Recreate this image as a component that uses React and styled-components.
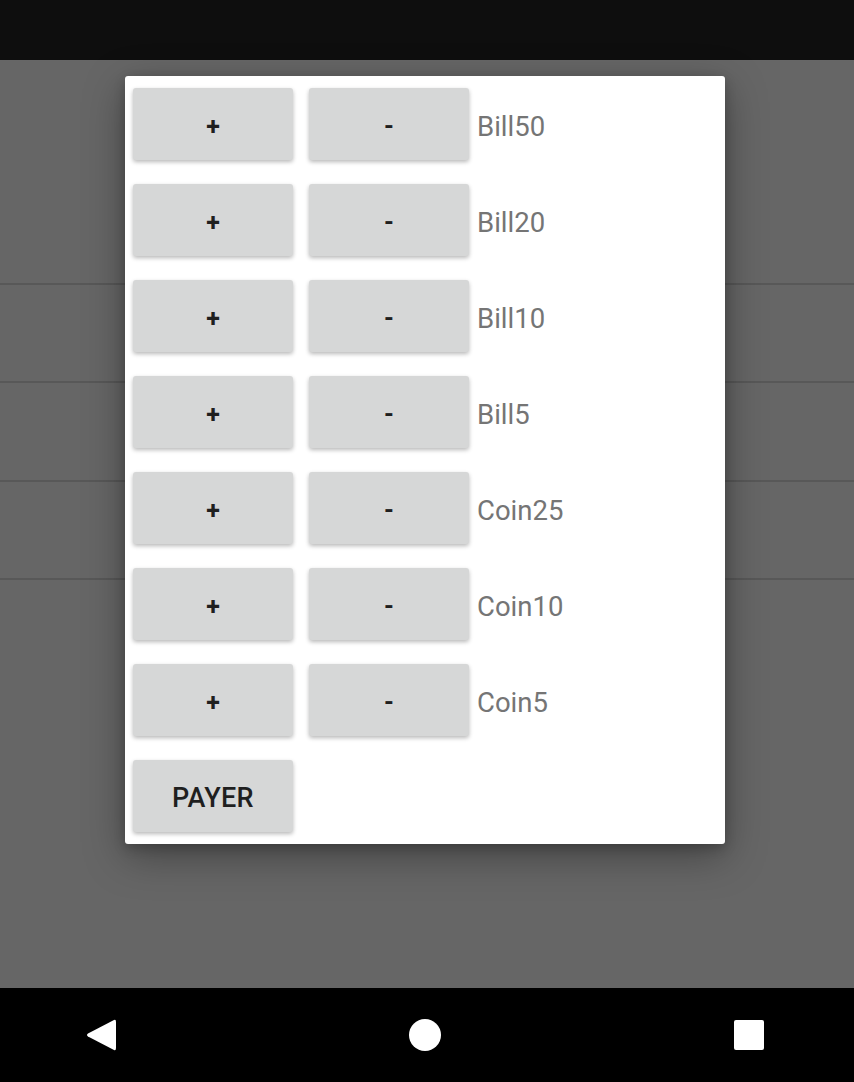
import React from 'react';
import styled, { createGlobalStyle } from 'styled-components';

const Global = createGlobalStyle`
    html, body {
        margin: 0;
        padding: 0;
    }
    body {
        font-family: Roboto, "Liberation Sans", sans-serif;
    }
`;

const Denominations = ['Bill50', 'Bill20', 'Bill10', 'Bill5', 'Coin25', 'Coin10', 'Coin5'];

const Screen = styled.div`
    position: relative;
    width: 854px;
    height: 1082px;
    display: flex;
    flex-direction: column;
    overflow: hidden;
`;
const StatusBar = styled.div`
    height: 60px;
    background-color: #0e0e0e;
`;
const Backdrop = styled.div`
    flex: 1;
    background-color: #666666;
    display: flex;
    flex-direction: column;
`;
const ListItem = styled.div`
    height: ${p => p.h}px;
    border-bottom: solid 2px #585858;
`;
const NavBar = styled.div`
    height: 94px;
    background-color: #000000;
    display: flex;
    align-items: center;
    justify-content: space-between;
    padding: 0 90px 0 86px;
`;
const Dialog = styled.div`
    position: absolute;
    top: 76px;
    left: 125px;
    width: 600px;
    box-sizing: border-box;
    padding: 12px 8px;
    background-color: #ffffff;
    border-radius: 3px;
    box-shadow: 0 12px 40px rgba(0, 0, 0, 0.35), 0 4px 12px rgba(0, 0, 0, 0.2);
    display: flex;
    flex-direction: column;
    gap: 24px;
`;
const Row = styled.div`
    display: flex;
    align-items: center;
    gap: 16px;
`;
const Sbutton = styled.button`
    width: 160px;
    height: 72px;
    border: none;
    border-radius: 3px;
    background-color: #d6d7d7;
    box-shadow: 0 2px 4px rgba(0, 0, 0, 0.28);
    color: #1f1f1f;
    font-family: Roboto, "Liberation Sans", sans-serif;
    font-weight: ${p => p.big ? 500 : 700};
    font-size: ${p => p.big ? 27 : 25}px;
    letter-spacing: ${p => p.big ? '0.3px' : '0'};
    padding: 4px 0 0;
    margin: 0;
`;
const Label = styled.span`
    margin-left: -8px;
    padding-top: 4px;
    color: #757575;
    font-size: 27.5px;
`;

function Back() {
    return (
        <svg width="30" height="34" viewBox="0 0 30 34">
            <path d="M28 2 Q30 1 30 4 L30 30 Q30 33 28 32 L2 18.5 Q0 17 2 15.5 Z" fill="#fff" />
        </svg>
    );
}

function App() {
    return (
        <Screen>
            <Global />
            <StatusBar />
            <Backdrop>
                <ListItem h={223} />
                <ListItem h={96} />
                <ListItem h={97} />
                <ListItem h={96} />
            </Backdrop>
            <NavBar>
                <Back />
                <svg width="32" height="32" viewBox="0 0 32 32">
                    <circle cx="16" cy="16" r="16" fill="#fff" />
                </svg>
                <svg width="30" height="30" viewBox="0 0 30 30">
                    <rect x="0" y="0" width="30" height="30" rx="2" fill="#fff" />
                </svg>
            </NavBar>
            <Dialog>
                {
                    Denominations.map((name, k) => {
                        return (
                            <Row key={k}>
                                <Sbutton>+</Sbutton>
                                <Sbutton>-</Sbutton>
                                <Label>{name}</Label>
                            </Row>
                        )
                    })
                }
                <Row>
                    <Sbutton big>PAYER</Sbutton>
                </Row>
            </Dialog>
        </Screen>
    )
}

export default App;
